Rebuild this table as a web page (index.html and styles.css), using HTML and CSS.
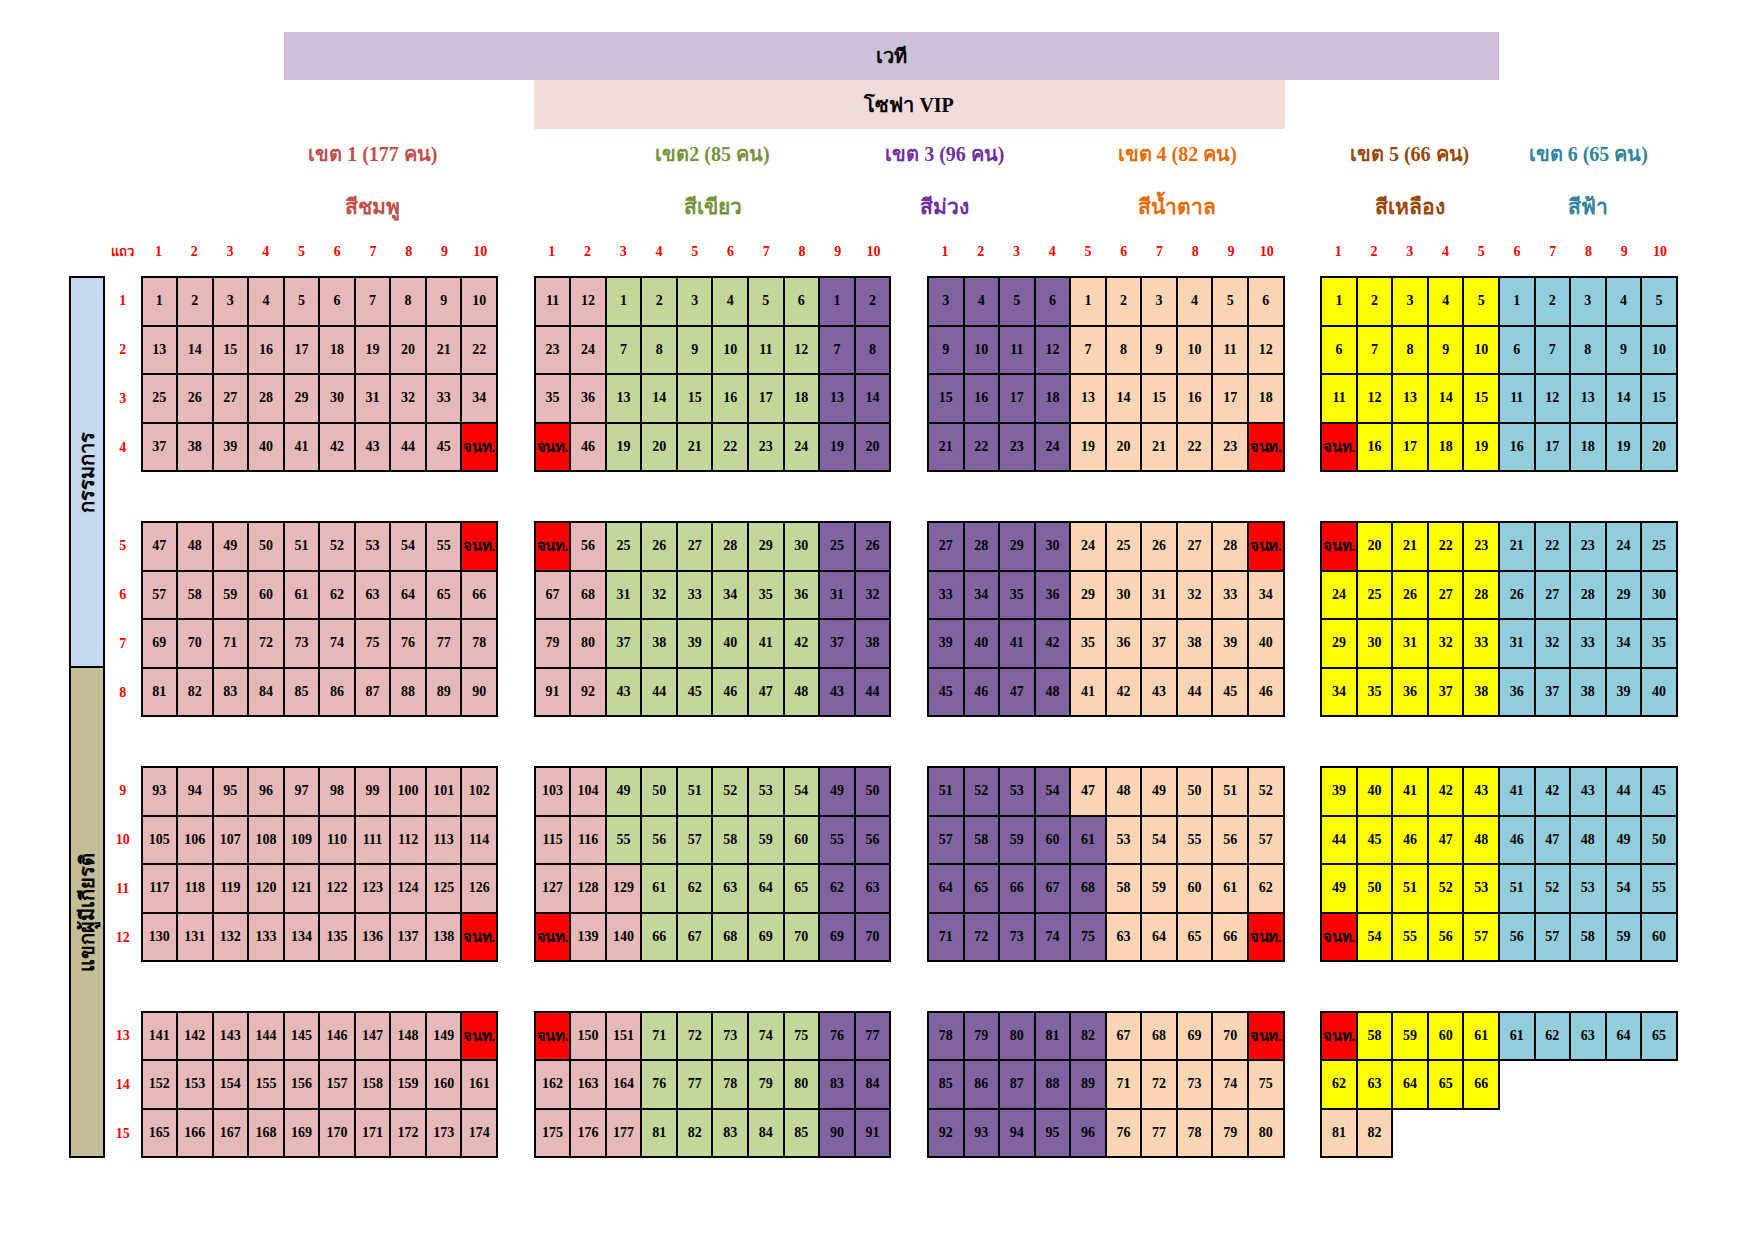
FILE: index.html
```html
<!DOCTYPE html>
<html lang="th">
<head>
<meta charset="utf-8">
<title>ผังที่นั่ง</title>
<link rel="stylesheet" href="styles.css">
</head>
<body>
<div class="sheet">
  <div class="stage">เวที</div>
  <div class="vip">โซฟา VIP</div>

  <div class="zt z1">เขต 1 (177 คน)</div>
  <div class="zt z2">เขต2 (85 คน)</div>
  <div class="zt z3">เขต 3 (96 คน)</div>
  <div class="zt z4">เขต 4 (82 คน)</div>
  <div class="zt z5">เขต 5 (66 คน)</div>
  <div class="zt z6">เขต 6 (65 คน)</div>

  <div class="zs z1">สีชมพู</div>
  <div class="zs z2">สีเขียว</div>
  <div class="zs z3">สีม่วง</div>
  <div class="zs z4">สีน้ำตาล</div>
  <div class="zs z5">สีเหลือง</div>
  <div class="zs z6">สีฟ้า</div>

  <div class="rowlabel">แถว</div>
  <div class="hdr ca"><span>1</span><span>2</span><span>3</span><span>4</span><span>5</span><span>6</span><span>7</span><span>8</span><span>9</span><span>10</span></div>
  <div class="hdr cb"><span>1</span><span>2</span><span>3</span><span>4</span><span>5</span><span>6</span><span>7</span><span>8</span><span>9</span><span>10</span></div>
  <div class="hdr cc"><span>1</span><span>2</span><span>3</span><span>4</span><span>5</span><span>6</span><span>7</span><span>8</span><span>9</span><span>10</span></div>
  <div class="hdr cd"><span>1</span><span>2</span><span>3</span><span>4</span><span>5</span><span>6</span><span>7</span><span>8</span><span>9</span><span>10</span></div>

  <div class="lab lab1"><span>กรรมการ</span></div>
  <div class="lab lab2"><span>แขกผู้มีเกียรติ</span></div>

  <div class="rownums">
    <span>1</span><span>2</span><span>3</span><span>4</span><span></span>
    <span>5</span><span>6</span><span>7</span><span>8</span><span></span>
    <span>9</span><span>10</span><span>11</span><span>12</span><span></span>
    <span>13</span><span>14</span><span>15</span>
  </div>

  <!-- Block 1 -->
  <div class="blk ca b1"><table>
    <tr><td class="p">1</td><td class="p">2</td><td class="p">3</td><td class="p">4</td><td class="p">5</td><td class="p">6</td><td class="p">7</td><td class="p">8</td><td class="p">9</td><td class="p">10</td></tr>
    <tr><td class="p">13</td><td class="p">14</td><td class="p">15</td><td class="p">16</td><td class="p">17</td><td class="p">18</td><td class="p">19</td><td class="p">20</td><td class="p">21</td><td class="p">22</td></tr>
    <tr><td class="p">25</td><td class="p">26</td><td class="p">27</td><td class="p">28</td><td class="p">29</td><td class="p">30</td><td class="p">31</td><td class="p">32</td><td class="p">33</td><td class="p">34</td></tr>
    <tr><td class="p">37</td><td class="p">38</td><td class="p">39</td><td class="p">40</td><td class="p">41</td><td class="p">42</td><td class="p">43</td><td class="p">44</td><td class="p">45</td><td class="r">จนท.</td></tr>
  </table></div>
  <div class="blk cb b1"><table>
    <tr><td class="p">11</td><td class="p">12</td><td class="g">1</td><td class="g">2</td><td class="g">3</td><td class="g">4</td><td class="g">5</td><td class="g">6</td><td class="v">1</td><td class="v">2</td></tr>
    <tr><td class="p">23</td><td class="p">24</td><td class="g">7</td><td class="g">8</td><td class="g">9</td><td class="g">10</td><td class="g">11</td><td class="g">12</td><td class="v">7</td><td class="v">8</td></tr>
    <tr><td class="p">35</td><td class="p">36</td><td class="g">13</td><td class="g">14</td><td class="g">15</td><td class="g">16</td><td class="g">17</td><td class="g">18</td><td class="v">13</td><td class="v">14</td></tr>
    <tr><td class="r">จนท.</td><td class="p">46</td><td class="g">19</td><td class="g">20</td><td class="g">21</td><td class="g">22</td><td class="g">23</td><td class="g">24</td><td class="v">19</td><td class="v">20</td></tr>
  </table></div>
  <div class="blk cc b1"><table>
    <tr><td class="v">3</td><td class="v">4</td><td class="v">5</td><td class="v">6</td><td class="o">1</td><td class="o">2</td><td class="o">3</td><td class="o">4</td><td class="o">5</td><td class="o">6</td></tr>
    <tr><td class="v">9</td><td class="v">10</td><td class="v">11</td><td class="v">12</td><td class="o">7</td><td class="o">8</td><td class="o">9</td><td class="o">10</td><td class="o">11</td><td class="o">12</td></tr>
    <tr><td class="v">15</td><td class="v">16</td><td class="v">17</td><td class="v">18</td><td class="o">13</td><td class="o">14</td><td class="o">15</td><td class="o">16</td><td class="o">17</td><td class="o">18</td></tr>
    <tr><td class="v">21</td><td class="v">22</td><td class="v">23</td><td class="v">24</td><td class="o">19</td><td class="o">20</td><td class="o">21</td><td class="o">22</td><td class="o">23</td><td class="r">จนท.</td></tr>
  </table></div>
  <div class="blk cd b1"><table>
    <tr><td class="y">1</td><td class="y">2</td><td class="y">3</td><td class="y">4</td><td class="y">5</td><td class="b">1</td><td class="b">2</td><td class="b">3</td><td class="b">4</td><td class="b">5</td></tr>
    <tr><td class="y">6</td><td class="y">7</td><td class="y">8</td><td class="y">9</td><td class="y">10</td><td class="b">6</td><td class="b">7</td><td class="b">8</td><td class="b">9</td><td class="b">10</td></tr>
    <tr><td class="y">11</td><td class="y">12</td><td class="y">13</td><td class="y">14</td><td class="y">15</td><td class="b">11</td><td class="b">12</td><td class="b">13</td><td class="b">14</td><td class="b">15</td></tr>
    <tr><td class="r">จนท.</td><td class="y">16</td><td class="y">17</td><td class="y">18</td><td class="y">19</td><td class="b">16</td><td class="b">17</td><td class="b">18</td><td class="b">19</td><td class="b">20</td></tr>
  </table></div>

  <!-- Block 2 -->
  <div class="blk ca b2"><table>
    <tr><td class="p">47</td><td class="p">48</td><td class="p">49</td><td class="p">50</td><td class="p">51</td><td class="p">52</td><td class="p">53</td><td class="p">54</td><td class="p">55</td><td class="r">จนท.</td></tr>
    <tr><td class="p">57</td><td class="p">58</td><td class="p">59</td><td class="p">60</td><td class="p">61</td><td class="p">62</td><td class="p">63</td><td class="p">64</td><td class="p">65</td><td class="p">66</td></tr>
    <tr><td class="p">69</td><td class="p">70</td><td class="p">71</td><td class="p">72</td><td class="p">73</td><td class="p">74</td><td class="p">75</td><td class="p">76</td><td class="p">77</td><td class="p">78</td></tr>
    <tr><td class="p">81</td><td class="p">82</td><td class="p">83</td><td class="p">84</td><td class="p">85</td><td class="p">86</td><td class="p">87</td><td class="p">88</td><td class="p">89</td><td class="p">90</td></tr>
  </table></div>
  <div class="blk cb b2"><table>
    <tr><td class="r">จนท.</td><td class="p">56</td><td class="g">25</td><td class="g">26</td><td class="g">27</td><td class="g">28</td><td class="g">29</td><td class="g">30</td><td class="v">25</td><td class="v">26</td></tr>
    <tr><td class="p">67</td><td class="p">68</td><td class="g">31</td><td class="g">32</td><td class="g">33</td><td class="g">34</td><td class="g">35</td><td class="g">36</td><td class="v">31</td><td class="v">32</td></tr>
    <tr><td class="p">79</td><td class="p">80</td><td class="g">37</td><td class="g">38</td><td class="g">39</td><td class="g">40</td><td class="g">41</td><td class="g">42</td><td class="v">37</td><td class="v">38</td></tr>
    <tr><td class="p">91</td><td class="p">92</td><td class="g">43</td><td class="g">44</td><td class="g">45</td><td class="g">46</td><td class="g">47</td><td class="g">48</td><td class="v">43</td><td class="v">44</td></tr>
  </table></div>
  <div class="blk cc b2"><table>
    <tr><td class="v">27</td><td class="v">28</td><td class="v">29</td><td class="v">30</td><td class="o">24</td><td class="o">25</td><td class="o">26</td><td class="o">27</td><td class="o">28</td><td class="r">จนท.</td></tr>
    <tr><td class="v">33</td><td class="v">34</td><td class="v">35</td><td class="v">36</td><td class="o">29</td><td class="o">30</td><td class="o">31</td><td class="o">32</td><td class="o">33</td><td class="o">34</td></tr>
    <tr><td class="v">39</td><td class="v">40</td><td class="v">41</td><td class="v">42</td><td class="o">35</td><td class="o">36</td><td class="o">37</td><td class="o">38</td><td class="o">39</td><td class="o">40</td></tr>
    <tr><td class="v">45</td><td class="v">46</td><td class="v">47</td><td class="v">48</td><td class="o">41</td><td class="o">42</td><td class="o">43</td><td class="o">44</td><td class="o">45</td><td class="o">46</td></tr>
  </table></div>
  <div class="blk cd b2"><table>
    <tr><td class="r">จนท.</td><td class="y">20</td><td class="y">21</td><td class="y">22</td><td class="y">23</td><td class="b">21</td><td class="b">22</td><td class="b">23</td><td class="b">24</td><td class="b">25</td></tr>
    <tr><td class="y">24</td><td class="y">25</td><td class="y">26</td><td class="y">27</td><td class="y">28</td><td class="b">26</td><td class="b">27</td><td class="b">28</td><td class="b">29</td><td class="b">30</td></tr>
    <tr><td class="y">29</td><td class="y">30</td><td class="y">31</td><td class="y">32</td><td class="y">33</td><td class="b">31</td><td class="b">32</td><td class="b">33</td><td class="b">34</td><td class="b">35</td></tr>
    <tr><td class="y">34</td><td class="y">35</td><td class="y">36</td><td class="y">37</td><td class="y">38</td><td class="b">36</td><td class="b">37</td><td class="b">38</td><td class="b">39</td><td class="b">40</td></tr>
  </table></div>

  <!-- Block 3 -->
  <div class="blk ca b3"><table>
    <tr><td class="p">93</td><td class="p">94</td><td class="p">95</td><td class="p">96</td><td class="p">97</td><td class="p">98</td><td class="p">99</td><td class="p">100</td><td class="p">101</td><td class="p">102</td></tr>
    <tr><td class="p">105</td><td class="p">106</td><td class="p">107</td><td class="p">108</td><td class="p">109</td><td class="p">110</td><td class="p">111</td><td class="p">112</td><td class="p">113</td><td class="p">114</td></tr>
    <tr><td class="p">117</td><td class="p">118</td><td class="p">119</td><td class="p">120</td><td class="p">121</td><td class="p">122</td><td class="p">123</td><td class="p">124</td><td class="p">125</td><td class="p">126</td></tr>
    <tr><td class="p">130</td><td class="p">131</td><td class="p">132</td><td class="p">133</td><td class="p">134</td><td class="p">135</td><td class="p">136</td><td class="p">137</td><td class="p">138</td><td class="r">จนท.</td></tr>
  </table></div>
  <div class="blk cb b3"><table>
    <tr><td class="p">103</td><td class="p">104</td><td class="g">49</td><td class="g">50</td><td class="g">51</td><td class="g">52</td><td class="g">53</td><td class="g">54</td><td class="v">49</td><td class="v">50</td></tr>
    <tr><td class="p">115</td><td class="p">116</td><td class="g">55</td><td class="g">56</td><td class="g">57</td><td class="g">58</td><td class="g">59</td><td class="g">60</td><td class="v">55</td><td class="v">56</td></tr>
    <tr><td class="p">127</td><td class="p">128</td><td class="p">129</td><td class="g">61</td><td class="g">62</td><td class="g">63</td><td class="g">64</td><td class="g">65</td><td class="v">62</td><td class="v">63</td></tr>
    <tr><td class="r">จนท.</td><td class="p">139</td><td class="p">140</td><td class="g">66</td><td class="g">67</td><td class="g">68</td><td class="g">69</td><td class="g">70</td><td class="v">69</td><td class="v">70</td></tr>
  </table></div>
  <div class="blk cc b3"><table>
    <tr><td class="v">51</td><td class="v">52</td><td class="v">53</td><td class="v">54</td><td class="o">47</td><td class="o">48</td><td class="o">49</td><td class="o">50</td><td class="o">51</td><td class="o">52</td></tr>
    <tr><td class="v">57</td><td class="v">58</td><td class="v">59</td><td class="v">60</td><td class="v">61</td><td class="o">53</td><td class="o">54</td><td class="o">55</td><td class="o">56</td><td class="o">57</td></tr>
    <tr><td class="v">64</td><td class="v">65</td><td class="v">66</td><td class="v">67</td><td class="v">68</td><td class="o">58</td><td class="o">59</td><td class="o">60</td><td class="o">61</td><td class="o">62</td></tr>
    <tr><td class="v">71</td><td class="v">72</td><td class="v">73</td><td class="v">74</td><td class="v">75</td><td class="o">63</td><td class="o">64</td><td class="o">65</td><td class="o">66</td><td class="r">จนท.</td></tr>
  </table></div>
  <div class="blk cd b3"><table>
    <tr><td class="y">39</td><td class="y">40</td><td class="y">41</td><td class="y">42</td><td class="y">43</td><td class="b">41</td><td class="b">42</td><td class="b">43</td><td class="b">44</td><td class="b">45</td></tr>
    <tr><td class="y">44</td><td class="y">45</td><td class="y">46</td><td class="y">47</td><td class="y">48</td><td class="b">46</td><td class="b">47</td><td class="b">48</td><td class="b">49</td><td class="b">50</td></tr>
    <tr><td class="y">49</td><td class="y">50</td><td class="y">51</td><td class="y">52</td><td class="y">53</td><td class="b">51</td><td class="b">52</td><td class="b">53</td><td class="b">54</td><td class="b">55</td></tr>
    <tr><td class="r">จนท.</td><td class="y">54</td><td class="y">55</td><td class="y">56</td><td class="y">57</td><td class="b">56</td><td class="b">57</td><td class="b">58</td><td class="b">59</td><td class="b">60</td></tr>
  </table></div>

  <!-- Block 4 -->
  <div class="blk ca b4"><table>
    <tr><td class="p">141</td><td class="p">142</td><td class="p">143</td><td class="p">144</td><td class="p">145</td><td class="p">146</td><td class="p">147</td><td class="p">148</td><td class="p">149</td><td class="r">จนท.</td></tr>
    <tr><td class="p">152</td><td class="p">153</td><td class="p">154</td><td class="p">155</td><td class="p">156</td><td class="p">157</td><td class="p">158</td><td class="p">159</td><td class="p">160</td><td class="p">161</td></tr>
    <tr><td class="p">165</td><td class="p">166</td><td class="p">167</td><td class="p">168</td><td class="p">169</td><td class="p">170</td><td class="p">171</td><td class="p">172</td><td class="p">173</td><td class="p">174</td></tr>
  </table></div>
  <div class="blk cb b4"><table>
    <tr><td class="r">จนท.</td><td class="p">150</td><td class="p">151</td><td class="g">71</td><td class="g">72</td><td class="g">73</td><td class="g">74</td><td class="g">75</td><td class="v">76</td><td class="v">77</td></tr>
    <tr><td class="p">162</td><td class="p">163</td><td class="p">164</td><td class="g">76</td><td class="g">77</td><td class="g">78</td><td class="g">79</td><td class="g">80</td><td class="v">83</td><td class="v">84</td></tr>
    <tr><td class="p">175</td><td class="p">176</td><td class="p">177</td><td class="g">81</td><td class="g">82</td><td class="g">83</td><td class="g">84</td><td class="g">85</td><td class="v">90</td><td class="v">91</td></tr>
  </table></div>
  <div class="blk cc b4"><table>
    <tr><td class="v">78</td><td class="v">79</td><td class="v">80</td><td class="v">81</td><td class="v">82</td><td class="o">67</td><td class="o">68</td><td class="o">69</td><td class="o">70</td><td class="r">จนท.</td></tr>
    <tr><td class="v">85</td><td class="v">86</td><td class="v">87</td><td class="v">88</td><td class="v">89</td><td class="o">71</td><td class="o">72</td><td class="o">73</td><td class="o">74</td><td class="o">75</td></tr>
    <tr><td class="v">92</td><td class="v">93</td><td class="v">94</td><td class="v">95</td><td class="v">96</td><td class="o">76</td><td class="o">77</td><td class="o">78</td><td class="o">79</td><td class="o">80</td></tr>
  </table></div>
  <div class="blk cd b4"><table>
    <tr><td class="r">จนท.</td><td class="y">58</td><td class="y">59</td><td class="y">60</td><td class="y">61</td><td class="b">61</td><td class="b">62</td><td class="b">63</td><td class="b">64</td><td class="b">65</td></tr>
    <tr><td class="y">62</td><td class="y">63</td><td class="y">64</td><td class="y">65</td><td class="y">66</td><td class="e"></td><td class="e"></td><td class="e"></td><td class="e"></td><td class="e"></td></tr>
    <tr><td class="o">81</td><td class="o">82</td><td class="e"></td><td class="e"></td><td class="e"></td><td class="e"></td><td class="e"></td><td class="e"></td><td class="e"></td><td class="e"></td></tr>
  </table></div>
</div>
</body>
</html>
```

FILE: styles.css
```css
* { box-sizing: border-box; }

body {
  margin: 0;
  background: #ffffff;
  font-family: "Liberation Serif", serif;
  color: #000;
}

.sheet {
  display: grid;
  grid-template-columns: repeat(45, 35.75px);
  grid-template-rows: repeat(23, 49px);
  padding: 31px 0 20px 69px;
}

.stage {
  grid-column: 7 / 41;
  grid-row: 1;
  background: #ccc0da;
  display: flex;
  align-items: center;
  justify-content: center;
  font-size: 20px;
  font-weight: bold;
  margin-top: 1px;
}

.vip {
  grid-column: 14 / 35;
  grid-row: 2;
  background: #f2dcdb;
  display: flex;
  align-items: center;
  justify-content: center;
  font-size: 20px;
  font-weight: bold;
}

.zt, .zs {
  display: flex;
  align-items: center;
  justify-content: center;
  white-space: nowrap;
  font-weight: bold;
  font-size: 20px;
}
.zt { grid-row: 3; }
.zs { grid-row: 4; padding-top: 8px; font-size: 21px; }

.zt.z1, .zs.z1 { grid-column: 7 / 12; color: #c0504d; }
.zt.z2, .zs.z2 { grid-column: 17 / 21; color: #76923c; }
.zt.z3, .zs.z3 { grid-column: 23 / 28; color: #7030a0; }
.zt.z4, .zs.z4 { grid-column: 30 / 34; color: #e36c09; }
.zt.z5, .zs.z5 { grid-column: 36 / 41; color: #974806; }
.zt.z6, .zs.z6 { grid-column: 41 / 46; color: #31849b; }

.rowlabel {
  grid-column: 2;
  grid-row: 5;
  display: flex;
  align-items: center;
  justify-content: center;
  color: #ff0000;
  font-weight: bold;
  font-size: 13px;
}

.hdr {
  grid-row: 5;
  display: grid;
  grid-template-columns: repeat(10, 1fr);
  color: #ff0000;
  font-weight: bold;
  font-size: 14px;
}
.hdr span {
  display: flex;
  align-items: center;
  justify-content: center;
}

.ca { grid-column: 3 / 13; }
.cb { grid-column: 14 / 24; }
.cc { grid-column: 25 / 35; }
.cd { grid-column: 36 / 46; }

.b1 { grid-row: 6 / 10; }
.b2 { grid-row: 11 / 15; }
.b3 { grid-row: 16 / 20; }
.b4 { grid-row: 21 / 24; }

.lab {
  grid-column: 1;
  border: 2px solid #000;
  display: flex;
  align-items: center;
  justify-content: center;
}
.lab span {
  writing-mode: vertical-rl;
  transform: rotate(180deg);
  font-size: 20px;
  font-weight: bold;
  white-space: nowrap;
}
.lab1 { grid-row: 6 / 14; background: #c5d9f1; }
.lab2 { grid-row: 14 / 24; background: #c4bd97; border-top: 0; }

.rownums {
  grid-column: 2;
  grid-row: 6 / 24;
  display: grid;
  grid-template-rows: repeat(18, 49px);
  color: #ff0000;
  font-weight: bold;
  font-size: 14px;
}
.rownums span {
  display: flex;
  align-items: center;
  justify-content: center;
}

.blk table {
  width: 100%;
  height: 100%;
  border-collapse: collapse;
  table-layout: fixed;
}
.blk td {
  border: 2px solid #000;
  padding: 0;
  text-align: center;
  vertical-align: middle;
  font-size: 14px;
  line-height: 16px;
  height: 16px;
  font-weight: bold;
  white-space: nowrap;
  overflow: hidden;
}
.blk td.p { background: #e6b8b7; }
.blk td.g { background: #c4d79b; }
.blk td.v { background: #8064a2; }
.blk td.o { background: #fcd5b4; }
.blk td.y { background: #ffff00; }
.blk td.b { background: #92cddc; }
.blk td.r { background: #ff0000; font-size: 15px; letter-spacing: -0.3px; }
.blk td.e { border: none; background: transparent; }
```
